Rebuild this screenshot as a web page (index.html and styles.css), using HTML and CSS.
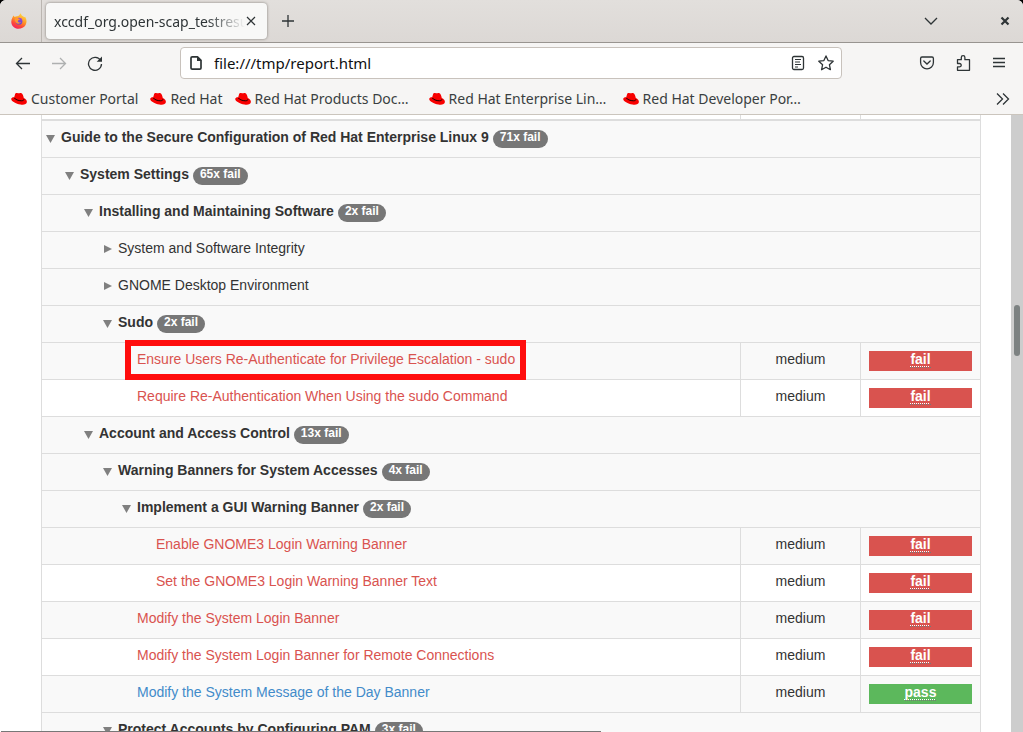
FILE: index.html
```html
<!DOCTYPE html>
<html lang="en">
<head>
<meta charset="utf-8">
<title>xccdf_org.open-scap_testresult</title>
<link rel="stylesheet" href="styles.css">
</head>
<body>
<svg class="defs" aria-hidden="true">
  <symbol id="hat" viewBox="0 0 16 16">
    <path fill="#f80000" d="M4 3.400C4.500 1.600 5.800 1.900 6.900 2.300c.9.3 1.800-.5 3-.2 1.700.5 2.400 2.300 2.900 5 2 .9 3.200 2.300 3.100 3.900-.2 2.500-3.300 3-6.400 2.500C5 12.800.1 10.200.2 8c.1-1.400 1.500-1.800 3-1.700z"/>
    <path fill="none" stroke="#180000" stroke-width="1" d="M3.300 6.900c.8 1.600 4.200 2.900 7 2.900 1.400 0 2.500-.4 2.700-1.400"/>
  </symbol>
</svg>
<div class="window">
  <header class="tabs">
    <button class="pinned" aria-label="Firefox View">
      <svg width="16" height="16" viewBox="0 0 16 16">
        <defs>
          <linearGradient id="flame" x1=".8" y1="0" x2=".3" y2="1"><stop offset="0" stop-color="#ffe14a"/><stop offset=".45" stop-color="#ff9a25"/><stop offset=".75" stop-color="#ff4838"/><stop offset="1" stop-color="#ef2360"/></linearGradient>
          <linearGradient id="globe" x1="0" y1="0" x2="0" y2="1"><stop offset="0" stop-color="#a446dc"/><stop offset="1" stop-color="#5a48cf"/></linearGradient>
        </defs>
        <path fill="url(#flame)" d="M1.600 4.200 2.500 2.600 3.600 3.900 4.900 3.600 7.300 3 8.400 1.900 9.600.2 10.800 2.500 13.400 4.200 14.100 3.700c1.600 2.600 2 5.500.5 8.200-2.600 4.300-9.100 5.300-12.500 1.500C-.3 10.800-.2 7 1.600 4.200z"/>
        <circle cx="8" cy="8.200" r="3.400" fill="url(#globe)"/>
        <path fill="#ff9830" d="M3.800 5.300c1.400-1 3-.7 3.900.5l1.300.3c-.2 1-1.800.9-2.200 1.800.2 1.500 2 1.900 3.200 1.100-.7 1.800-3.600 2.400-5.100.5-1-1.200-1.400-2.700-1.100-4.200z"/>
      </svg>
    </button>
    <div class="tab">
      <span class="tab-title">xccdf_org.open-scap_testresult</span>
      <button class="tab-close" aria-label="Close tab"><svg width="10" height="10" viewBox="0 0 10 10"><path d="m1 1 8 8M9 1 1 9"/></svg></button>
    </div>
    <button class="new-tab" aria-label="New tab"><svg width="12" height="12" viewBox="0 0 12 12"><path d="M6 0v12M0 6h12"/></svg></button>
    <button class="tab-list" aria-label="List all tabs"><svg width="14" height="8" viewBox="0 0 14 8"><path d="m1 1 6 6 6-6"/></svg></button>
    <button class="win-close" aria-label="Close window"><svg width="10" height="10" viewBox="0 0 10 10"><path stroke-width="2.200" d="m1.500 1.500 7 7M8.500 1.500l-7 7"/></svg></button>
  </header>
  <nav class="toolbar">
    <button class="tool" aria-label="Back"><svg width="16" height="16" viewBox="0 0 16 16"><path d="M15 8.500H1.500M7 3 1.500 8.500 7 14"/></svg></button>
    <button class="tool" aria-label="Forward" disabled><svg width="16" height="16" viewBox="0 0 16 16"><path d="M1 8.500h13.500M9 3l5.500 5.500L9 14"/></svg></button>
    <button class="tool" aria-label="Reload"><svg width="16" height="16" viewBox="0 0 16 16"><path d="M13.600 5.500A6.500 6.500 0 1 0 14.500 9"/><path class="solid" d="M15 1.500v5.300H9.700z"/></svg></button>
    <div class="urlbar">
      <svg width="16" height="16" viewBox="0 0 16 16"><path stroke-width="1.700" stroke-linejoin="round" d="M9.500 1.800H4.200a1.200 1.200 0 0 0-1.200 1.200v10c0 .7.5 1.200 1.200 1.200h7.600c.7 0 1.200-.5 1.200-1.200V5.300z"/><path class="solid" d="M9 1.500V6h4.500z"/></svg>
      <input class="url" type="text" aria-label="Address" value="file:///tmp/report.html">
      <button class="inner" aria-label="Reader view"><svg width="16" height="16" viewBox="0 0 16 16"><rect x="2.500" y="1.500" width="11" height="13" rx="1.500"/><path stroke-width="1" d="M5 4.500h6M5 7h5M5 9.500h6M5 12h3"/></svg></button>
      <button class="inner" aria-label="Bookmark this page"><svg width="16" height="16" viewBox="0 0 16 16"><path stroke-linejoin="round" d="m8 .9 2.100 4.700 5.100.6-3.800 3.500 1 5L8 12.200l-4.400 2.500 1-5L.8 6.200l5.100-.6z"/></svg></button>
    </div>
    <button class="tool" aria-label="Save to Pocket"><svg width="16" height="16" viewBox="0 0 16 16"><path d="M3 2h10c.9 0 1.400.6 1.400 1.400v4.100a6.400 6.400 0 0 1-12.800 0V3.400C1.600 2.600 2.100 2 3 2z"/><path stroke-linecap="round" d="M4.800 6 8 9l3.200-3"/></svg></button>
    <button class="tool" aria-label="Extensions"><svg width="16" height="16" viewBox="0 0 16 16"><path stroke-linejoin="round" d="M2.500 7.300V4.700h3.800V2.500a1.800 1.800 0 0 1 3.600 0v2.200h4.600v10.600h-12v-3.400h2a1.700 1.700 0 0 0 0-3.400h-2z"/></svg></button>
    <button class="tool" aria-label="Open menu"><svg width="12" height="16" viewBox="0 0 12 16"><path d="M0 3.500h12M0 7.500h12M0 11.500h12"/></svg></button>
  </nav>
  <nav class="bookmarks">
    <a href="#"><svg width="16" height="16"><use href="#hat"/></svg><span>Customer Portal</span></a>
    <a href="#"><svg width="16" height="16"><use href="#hat"/></svg><span>Red Hat</span></a>
    <a href="#"><svg width="16" height="16"><use href="#hat"/></svg><span class="long">Red Hat Products Doc…</span></a>
    <a href="#"><svg width="16" height="16"><use href="#hat"/></svg><span class="long">Red Hat Enterprise Lin…</span></a>
    <a href="#"><svg width="16" height="16"><use href="#hat"/></svg><span class="long">Red Hat Developer Por…</span></a>
    <button class="more" aria-label="More bookmarks"><svg width="14" height="12" viewBox="0 0 14 12"><path d="m1 .5 5.500 5.500L1 11.500M7 .5 12.500 6 7 11.500"/></svg></button>
  </nav>
  <div class="viewport">
    <main class="page">
      <table class="report">
        <colgroup><col><col class="narrow"><col class="narrow"></colgroup>
        <thead><tr><th></th><th></th><th></th></tr></thead>
        <tbody>
          <tr class="group"><td colspan="3"><div class="node"><button class="arrow open" aria-label="Collapse"></button><strong>Guide to the Secure Configuration of Red Hat Enterprise Linux 9</strong><span class="badge">71x fail</span></div></td></tr>
          <tr class="group"><td colspan="3"><div class="node l1"><button class="arrow open" aria-label="Collapse"></button><strong>System Settings</strong><span class="badge">65x fail</span></div></td></tr>
          <tr class="group"><td colspan="3"><div class="node l2"><button class="arrow open" aria-label="Collapse"></button><strong>Installing and Maintaining Software</strong><span class="badge">2x fail</span></div></td></tr>
          <tr class="group"><td colspan="3"><div class="node l3"><button class="arrow" aria-label="Expand"></button><span>System and Software Integrity</span></div></td></tr>
          <tr class="group"><td colspan="3"><div class="node l3"><button class="arrow" aria-label="Expand"></button><span>GNOME Desktop Environment</span></div></td></tr>
          <tr class="group"><td colspan="3"><div class="node l3"><button class="arrow open" aria-label="Collapse"></button><strong>Sudo</strong><span class="badge">2x fail</span></div></td></tr>
          <tr class="shade"><td><div class="rule r4"><a class="marked" href="#">Ensure Users Re-Authenticate for Privilege Escalation - sudo</a></div></td><td class="severity">medium</td><td class="result"><div class="fail"><abbr title="Rule failed">fail</abbr></div></td></tr>
          <tr><td><div class="rule r4"><a href="#">Require Re-Authentication When Using the sudo Command</a></div></td><td class="severity">medium</td><td class="result"><div class="fail"><abbr title="Rule failed">fail</abbr></div></td></tr>
          <tr class="group"><td colspan="3"><div class="node l2"><button class="arrow open" aria-label="Collapse"></button><strong>Account and Access Control</strong><span class="badge">13x fail</span></div></td></tr>
          <tr class="group"><td colspan="3"><div class="node l3"><button class="arrow open" aria-label="Collapse"></button><strong>Warning Banners for System Accesses</strong><span class="badge">4x fail</span></div></td></tr>
          <tr class="group"><td colspan="3"><div class="node l4"><button class="arrow open" aria-label="Collapse"></button><strong>Implement a GUI Warning Banner</strong><span class="badge">2x fail</span></div></td></tr>
          <tr class="shade"><td><div class="rule r5"><a href="#">Enable GNOME3 Login Warning Banner</a></div></td><td class="severity">medium</td><td class="result"><div class="fail"><abbr title="Rule failed">fail</abbr></div></td></tr>
          <tr><td><div class="rule r5"><a href="#">Set the GNOME3 Login Warning Banner Text</a></div></td><td class="severity">medium</td><td class="result"><div class="fail"><abbr title="Rule failed">fail</abbr></div></td></tr>
          <tr class="shade"><td><div class="rule r4"><a href="#">Modify the System Login Banner</a></div></td><td class="severity">medium</td><td class="result"><div class="fail"><abbr title="Rule failed">fail</abbr></div></td></tr>
          <tr><td><div class="rule r4"><a href="#">Modify the System Login Banner for Remote Connections</a></div></td><td class="severity">medium</td><td class="result"><div class="fail"><abbr title="Rule failed">fail</abbr></div></td></tr>
          <tr class="shade"><td><div class="rule r4"><a class="ok" href="#">Modify the System Message of the Day Banner</a></div></td><td class="severity">medium</td><td class="result"><div class="pass"><abbr title="Rule passed">pass</abbr></div></td></tr>
          <tr class="group"><td colspan="3"><div class="node l3"><button class="arrow open" aria-label="Collapse"></button><strong>Protect Accounts by Configuring PAM</strong><span class="badge">3x fail</span></div></td></tr>
        </tbody>
      </table>
    </main>
    <div class="scrollbar"><div class="thumb"></div></div>
    <div class="status"></div>
  </div>
</div>
</body>
</html>
```
FILE: styles.css
```css
* { box-sizing: border-box; }
body {
  margin: 0;
  background: #000;
  font-family: "Noto Sans", "Open Sans", sans-serif;
  color: #2e3436;
}
.defs { position: absolute; width: 0; height: 0; }
button {
  display: flex;
  align-items: center;
  justify-content: center;
  padding: 0;
  border: 0;
  background: none;
  color: inherit;
}
svg { flex: none; fill: none; stroke: currentColor; stroke-width: 1.3; }
.bookmarks a svg, .pinned svg { stroke: none; }
.solid { fill: currentColor; stroke: none; }

.window {
  display: flex;
  flex-direction: column;
  height: 100vh;
  overflow: hidden;
  border-radius: 6px 6px 0 0;
  background: #f6f5f4;
}
.tabs {
  display: flex;
  align-items: center;
  height: 43px;
  flex: none;
  border-bottom: 1px solid #989490;
  background: linear-gradient(#e2dfdc, #dcd8d5);
}
.pinned {
  width: 42px;
  height: 42px;
  padding-right: 4px;
  border-right: 1px solid #bbb6b1;
}
.tab {
  display: flex;
  align-items: center;
  width: 221px;
  height: 36px;
  margin-left: 4px;
  padding: 0 10px 0 8px;
  border-radius: 4px;
  background: #f8f8f7;
  box-shadow: 0 0 3px #807b76;
}
.tab-title {
  flex: 1;
  overflow: hidden;
  white-space: nowrap;
  font-size: 14px;
  mask-image: linear-gradient(to right, #000 80%, transparent);
}
.tab-close svg { stroke-width: 1.2; }
.tab-close { width: 12px; height: 24px; }
.new-tab { width: 42px; height: 36px; }
.tab-list { width: 28px; height: 36px; margin-left: auto; }
.win-close { width: 28px; height: 36px; margin: 0 4px 0 46px; }

.toolbar {
  display: flex;
  align-items: center;
  height: 41px;
  flex: none;
  padding: 0 6px 2px 5px;
}
.tool { width: 36px; height: 36px; }
.tool:disabled { color: #aeb0b0; }
.urlbar {
  display: flex;
  align-items: center;
  flex: 1;
  height: 32px;
  margin: 0 67px;
  padding: 0 1px 0 7px;
  border: 1px solid #c8c2bc;
  border-radius: 4px;
  background: #fff;
}
.url {
  flex: 1;
  min-width: 0;
  padding: 0 0 0 10px;
  border: 0;
  outline: 0;
  background: none;
  color: #101010;
  font: 15px "Noto Sans", "Open Sans", sans-serif;
}
.inner { width: 28px; height: 28px; }

.bookmarks {
  display: flex;
  align-items: center;
  gap: 12px;
  height: 31px;
  flex: none;
  padding: 0 13px 0 11px;
  border-bottom: 1px solid #cbc5bd;
}
.bookmarks a {
  display: flex;
  align-items: center;
  gap: 4px;
  color: #3a3f41;
  font-size: 14px;
  line-height: 20px;
  text-decoration: none;
  white-space: nowrap;
}
.long { width: 162px; }
.more { margin-left: auto; }

.viewport {
  position: relative;
  display: flex;
  flex: 1;
  min-height: 0;
  overflow: hidden;
  background: #fff;
}
.page {
  flex: 1;
  padding: 0 30px 0 41px;
  font: 14px/20px "Liberation Sans", Arial, sans-serif;
  color: #333;
}
.report {
  width: 100%;
  table-layout: fixed;
  border-spacing: 0;
  border-left: 1px solid #ddd;
}
.narrow { width: 120px; }
th {
  height: 6px;
  padding: 0;
  border-right: 1px solid #ddd;
  border-bottom: 2px solid #ddd;
}
td {
  height: 37px;
  padding: 6px 8px 10px;
  border-right: 1px solid #ddd;
  border-bottom: 1px solid #ddd;
  vertical-align: top;
}
.group td { padding-left: 4px; }
.group, .shade { background: #f9f9f9; }
.node { display: flex; height: 20px; white-space: nowrap; }
.l1 { padding-left: 19px; }
.l2 { padding-left: 38px; }
.l3 { padding-left: 57px; }
.l4 { padding-left: 76px; }
.r4 { padding-left: 87px; }
.r5 { padding-left: 106px; }
.arrow { width: 15px; height: 20px; padding-top: 2px; justify-content: flex-start; }
.arrow.open { padding-top: 4px; }
.arrow::before {
  content: "";
  width: 8px;
  height: 8px;
  margin-left: 1px;
  background: #808080;
  clip-path: polygon(0 0, 100% 50%, 0 100%);
}
.arrow.open::before { width: 9px; margin-left: 0; clip-path: polygon(0 0, 100% 0, 50% 100%); }
.badge {
  height: 18px;
  margin: 3px 0 0 4px;
  padding: 1px 7px 5px;
  border-radius: 10px;
  background: #777;
  color: #fff;
  font-size: 12px;
  font-weight: 700;
  line-height: 12px;
}
.rule a { position: relative; display: inline-block; color: #d9534f; text-decoration: none; }
.rule .ok { color: #428bca; }
.marked::after {
  content: "";
  position: absolute;
  inset: -9px -11px -11px -12px;
  border: 6px solid #ff0d0d;
}
.severity { text-align: center; }
.result { padding: 8px; text-align: center; }
.fail, .pass {
  height: 20px;
  background: #d9534f;
  color: #fff;
  font-weight: 700;
  line-height: 16px;
}
.pass { background: #5cb85c; }
abbr { border-bottom: 1px dotted #777; text-decoration: underline dotted 1px; text-underline-offset: 2px; }

.scrollbar { width: 12px; padding: 190px 3px 0; background: #cdcdcd; }
.thumb { height: 51px; border-radius: 3px; background: #7d8282; }
.status {
  position: absolute;
  left: 1px;
  bottom: 0;
  width: 600px;
  height: 1px;
  background: #777;
}
```
